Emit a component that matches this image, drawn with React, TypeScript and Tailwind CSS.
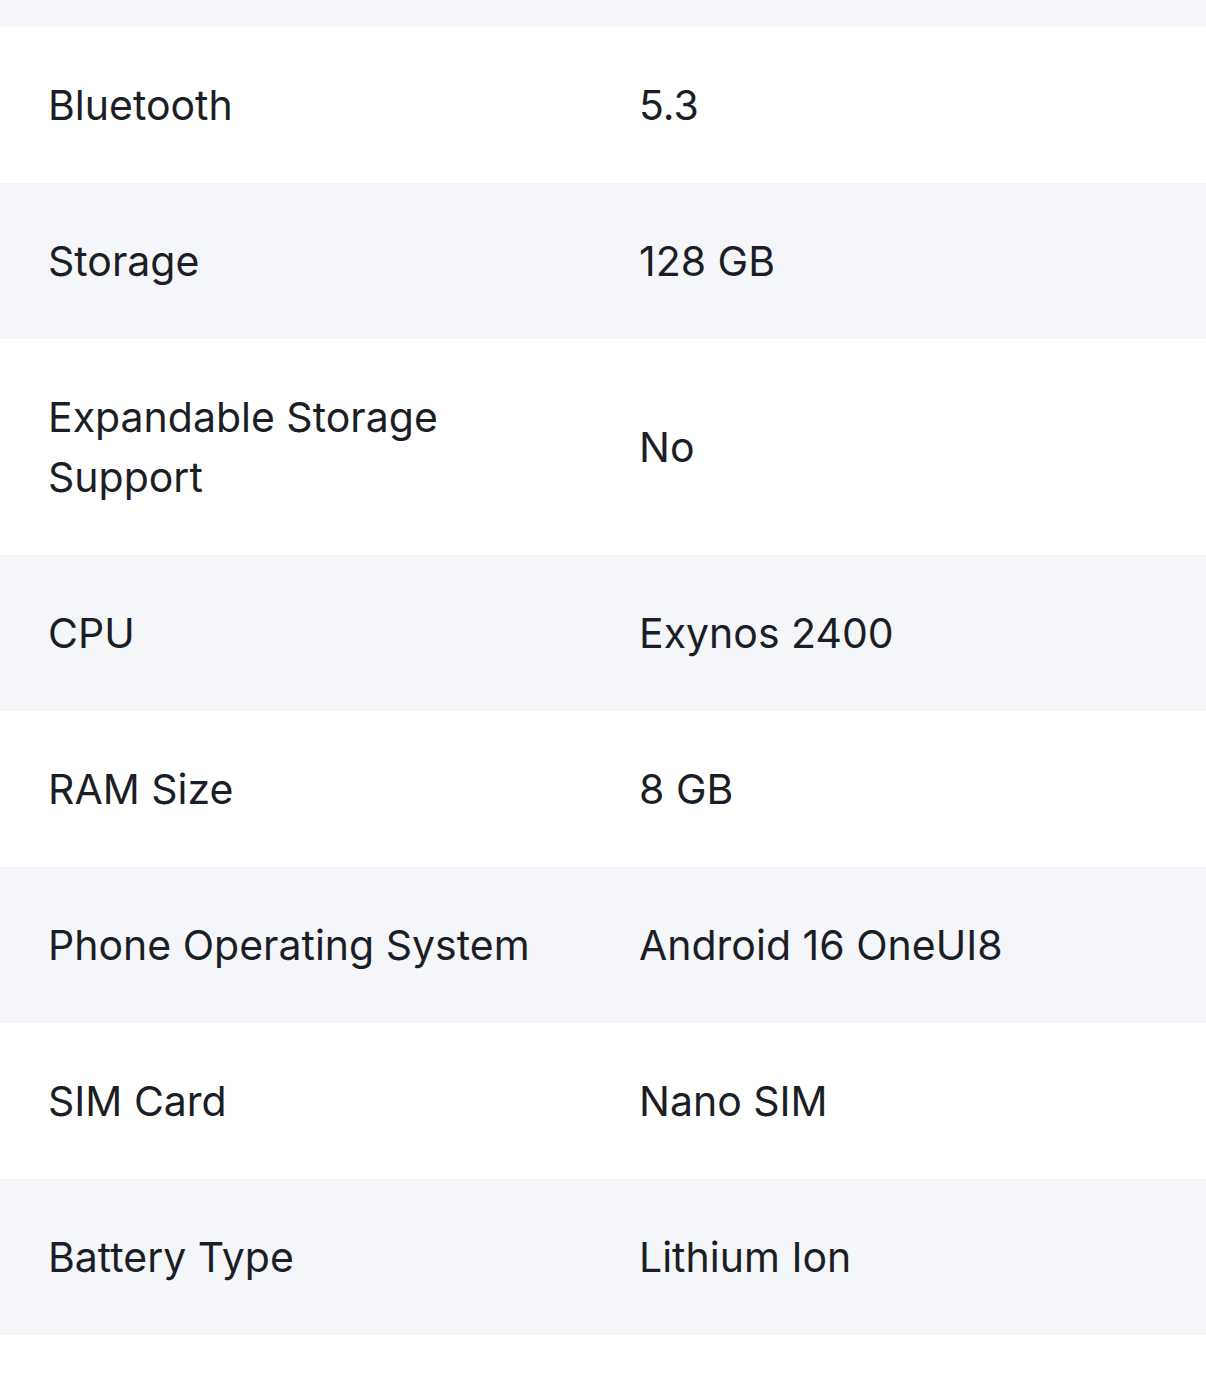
const specs: [string, string][] = [
  ['Bluetooth', '5.3'],
  ['Storage', '128 GB'],
  ['Expandable Storage Support', 'No'],
  ['CPU', 'Exynos 2400'],
  ['RAM Size', '8 GB'],
  ['Phone Operating System', 'Android 16 OneUI8'],
  ['SIM Card', 'Nano SIM'],
  ['Battery Type', 'Lithium Ion'],
]

export default function App() {
  return (
    <div className="w-[1206px] bg-white text-[#1b1e25] font-['Inter',sans-serif] text-[41px] leading-[60px]">
      <div className="h-[27px] bg-[#f5f6fa]" />
      {specs.map(([label, value], i) => (
        <div
          key={label}
          className={`flex items-center py-[48px] pl-[48px] ${i % 2 === 1 ? 'bg-[#f5f6fa]' : 'bg-white'}`}
        >
          <div className="w-[591px] shrink-0 pr-[40px]">{label}</div>
          <div className="flex-1">{value}</div>
        </div>
      ))}
      <div className="h-[56px] bg-white" />
    </div>
  )
}
